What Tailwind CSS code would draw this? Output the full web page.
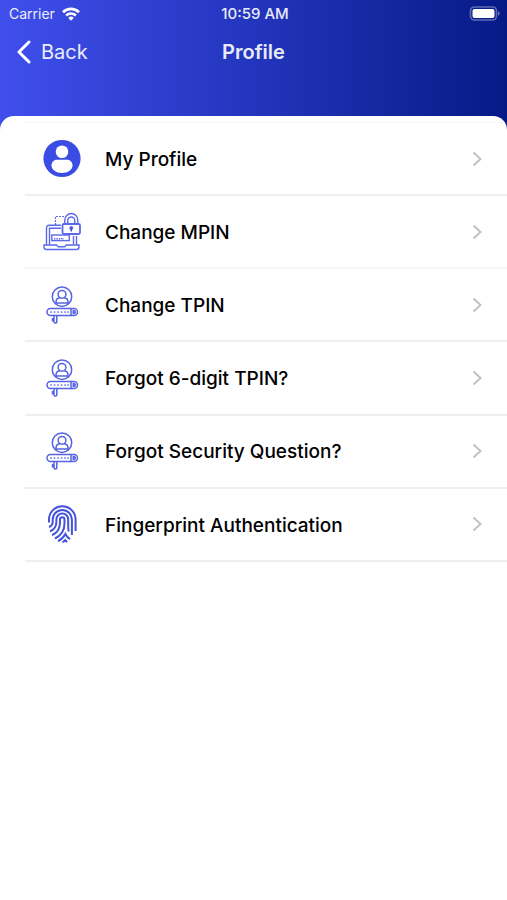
<!DOCTYPE html>
<html lang="en">
<head>
    <meta charset="UTF-8">
    <meta name="viewport" content="width=device-width, initial-scale=1.0">
    <title>Profile</title>
    <script src="https://cdn.jsdelivr.net/npm/@tailwindcss/browser@4"></script>
</head>
<body class="min-h-screen flex flex-col bg-linear-to-r from-[#404fec] via-[#2335bd] to-[#061a86] font-[Inter,'Liberation_Sans',sans-serif]">
    <!-- Status bar -->
    <div class="grid grid-cols-3 items-center h-7 pl-[9px] pr-[6px] text-sm text-white/90">
        <div class="flex items-center gap-[7px]">
            <span>Carrier</span>
            <svg class="w-[18px] h-[14px]" viewBox="0 0 18 14" fill="none" stroke="#fff" stroke-width="2.6" aria-hidden="true">
                <path d="M1 5.2a11.4 11.4 0 0 1 16 0" />
                <path d="M4.1 8.5a7 7 0 0 1 9.8 0" />
                <path d="M9 13.7 6.3 10.9a3.9 3.9 0 0 1 5.4 0z" fill="#fff" stroke="none" />
            </svg>
        </div>
        <span class="text-center text-[15px] font-medium">10:59 AM</span>
        <svg class="justify-self-end w-[32px] h-[16px]" viewBox="0 0 32 16" aria-hidden="true">
            <rect x="1.5" y="1" width="26" height="13" rx="4" fill="none" stroke="#fff" stroke-opacity=".35" stroke-width="1.6" />
            <rect x="3.5" y="3" width="22" height="9" rx="2" fill="#fff" />
            <path d="M29.2 5.300v4.400c1.8-.8 1.8-3.6 0-4.400z" fill="#fff" fill-opacity=".5" />
        </svg>
    </div>

    <!-- Navigation bar -->
    <header class="grid grid-cols-3 items-center h-12 px-4 mb-10 text-xl text-white/90">
        <button type="button" class="flex items-center gap-[9px] justify-self-start">
            <svg class="w-4 h-6" viewBox="0 0 16 24" fill="none" stroke="#fff" stroke-width="3" stroke-linecap="round" stroke-linejoin="round" aria-hidden="true">
                <path d="M13 2 3 12l10 10" />
            </svg>
            Back
        </button>
        <h1 class="text-center font-semibold">Profile</h1>
    </header>

    <!-- Shared icons -->
    <svg class="hidden" aria-hidden="true">
        <symbol id="chevron" viewBox="0 0 10 16">
            <path d="m1.5 1.5 7 6.5-7 6.5" fill="none" stroke="#c2c2c4" stroke-width="2" />
        </symbol>
        <symbol id="user-pin" viewBox="0 0 40 40">
            <g fill="none" stroke="#5663e2" stroke-width="1.5" stroke-linecap="round">
                <circle cx="20" cy="11.7" r="9.7" />
                <circle cx="20" cy="9.3" r="3.9" />
                <path d="M14 19v-2c0-2.4 1.6-4 3.7-4.300M26 19v-2c0-2.400-1.600-4-3.700-4.300M14.500 18h11" />
                <rect x="5" y="23.500" width="30.500" height="7" rx="3.500" />
                <path d="M29 23.500v7M31.300 25.500v3c2.600 0 2.600-3 0-3z" />
                <path d="M9 27h.1M12.500 27h.1M16 27h.1M19.500 27h.1M23 27h.1M26 27h.1" stroke-width="1.700" />
                <path d="M12 30.500v3.200h-1.500v2H12M14.800 30.500V37c-.4 1.400-2.400 1.400-2.800 0v-3.300" />
            </g>
        </symbol>
    </svg>

    <main class="flex-1 bg-white rounded-t-[14px] overflow-hidden pt-[6px]">
        <ul class="grid grid-rows-6 min-h-[440px] ml-[25px] border-t border-[#f6f6f6] text-black text-[19px] font-medium">
            <li>
                <a href="#" class="flex items-center h-full pl-[17px] pr-[25px] border-b-2 border-[#efefef]">
                    <svg class="w-10 h-10 mr-[23px]" viewBox="0 0 40 40" aria-hidden="true">
                        <circle cx="20" cy="19.500" r="18.600" fill="#3b4ce4" />
                        <circle cx="20" cy="12.800" r="6.300" fill="#fff" />
                        <path d="M15 20.800h10c3.400 0 5.500 2.500 5.500 5.500 0 4.700-4.500 7.700-10.500 7.700s-10.500-3-10.500-7.700c0-3 2.100-5.500 5.500-5.500z" fill="#fff" />
                    </svg>
                    <span class="flex-1 pt-[3px]">My Profile</span>
                    <svg class="w-[10px] h-4" aria-hidden="true"><use href="#chevron" /></svg>
                </a>
            </li>
            <li>
                <a href="#" class="flex items-center h-full pl-[17px] pr-[25px] border-b-2 border-[#f5f5f5]">
                    <svg class="w-10 h-10 mr-[23px]" viewBox="0 0 40 40" fill="none" stroke="#5b68ea" stroke-width="1.400" aria-hidden="true">
                        <path d="M13.500 13V4.500H22" stroke-dasharray="2 1" stroke-width="1.200" />
                        <!-- laptop -->
                        <path d="M4.500 33V16c0-1.800 1-2.800 2.800-2.800H19M34.500 24v9" />
                        <path d="M7.500 32.500V16.300H19M31.500 24v8.500" />
                        <path d="M2 33h12.500l1.800 1.700h6.400l1.800-1.700H37v2c0 1.600-1 2.500-2.500 2.500h-30C3 37.500 2 36.600 2 35z" />
                        <rect x="9.800" y="23" width="17.500" height="5.600" />
                        <path d="M12 26.700h10" stroke-dasharray="1.400 1" />
                        <!-- padlock -->
                        <rect x="20.500" y="12" width="17.500" height="10" rx="1.500" stroke-width="1.800" fill="#fff" />
                        <path d="M22.800 12V8a6.500 6.500 0 0 1 13 0v4M25.800 12V8.500a3.500 3.500 0 0 1 7 0V12" />
                        <circle cx="29.300" cy="16" r="1.300" fill="#3b48c8" />
                        <path d="M29.300 16v3.500" stroke="#3b48c8" />
                    </svg>
                    <span class="flex-1 pt-[3px]">Change MPIN</span>
                    <svg class="w-[10px] h-4" aria-hidden="true"><use href="#chevron" /></svg>
                </a>
            </li>
            <li>
                <a href="#" class="flex items-center h-full pl-[17px] pr-[25px] border-b-2 border-[#efefef]">
                    <svg class="w-10 h-10 mr-[23px]" aria-hidden="true"><use href="#user-pin" /></svg>
                    <span class="flex-1 pt-[3px]">Change TPIN</span>
                    <svg class="w-[10px] h-4" aria-hidden="true"><use href="#chevron" /></svg>
                </a>
            </li>
            <li>
                <a href="#" class="flex items-center h-full pl-[17px] pr-[25px] border-b-2 border-[#efefef]">
                    <svg class="w-10 h-10 mr-[23px]" aria-hidden="true"><use href="#user-pin" /></svg>
                    <span class="flex-1 pt-[3px]">Forgot 6-digit TPIN?</span>
                    <svg class="w-[10px] h-4" aria-hidden="true"><use href="#chevron" /></svg>
                </a>
            </li>
            <li>
                <a href="#" class="flex items-center h-full pl-[17px] pr-[25px] border-b-2 border-[#efefef]">
                    <svg class="w-10 h-10 mr-[23px]" aria-hidden="true"><use href="#user-pin" /></svg>
                    <span class="flex-1 pt-[3px]">Forgot Security Question?</span>
                    <svg class="w-[10px] h-4" aria-hidden="true"><use href="#chevron" /></svg>
                </a>
            </li>
            <li>
                <a href="#" class="flex items-center h-full pl-[17px] pr-[25px] border-b-2 border-[#efefef]">
                    <svg class="w-10 h-10 mr-[23px]" viewBox="0 0 40 40" fill="none" stroke="#4453dc" stroke-width="2" aria-hidden="true">
                        <path d="M7 18.500V15.500a13.300 13.300 0 0 1 26.600 0v11.500" />
                        <path d="M7 23c2.500-1 3.700-2.500 3.700-5v-2.500a9.600 9.600 0 0 1 19.200 0V31" />
                        <path d="M8 27.200c4.200-1.500 6.400-4.500 6.400-9.200v-2.500a5.900 5.900 0 0 1 11.800 0V23c0 1.500.2 3 .6 4.500" />
                        <path d="M10 31.200c5.200-2.200 8-6.700 8-12.700v-3a2.200 2.200 0 0 1 4.500 0v4c0 6.500-3.500 12-9.500 15" />
                        <path d="M16 37.200c3.300-1.600 5.700-4 7.400-7.200 1.100 2.200 2.700 4 4.600 5.200" />
                        <path d="M20.500 38.300c1.200-.7 2-1.400 2.700-2.200.7.800 1.300 1.400 2 1.900" />
                    </svg>
                    <span class="flex-1 pt-[3px]">Fingerprint Authentication</span>
                    <svg class="w-[10px] h-4" aria-hidden="true"><use href="#chevron" /></svg>
                </a>
            </li>
        </ul>
    </main>
</body>
</html>
